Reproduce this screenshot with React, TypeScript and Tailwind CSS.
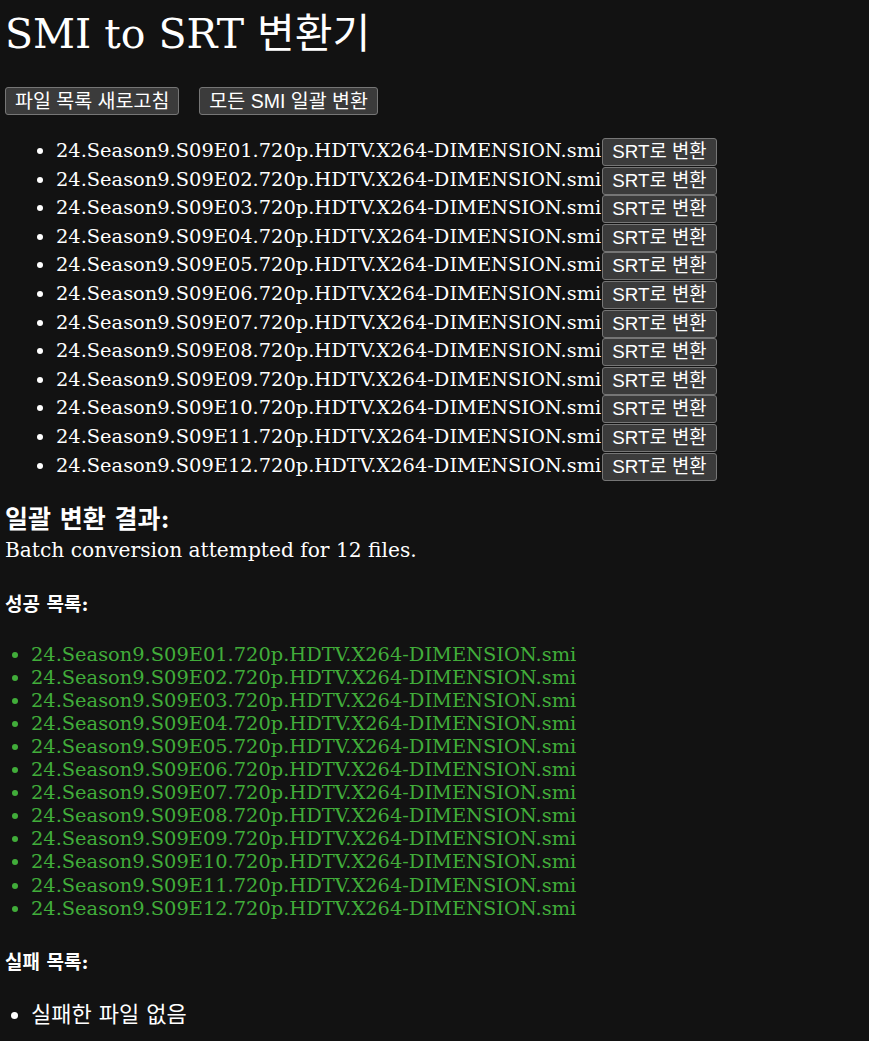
const files = Array.from({ length: 12 }, (_, i) =>
  `24.Season9.S09E${String(i + 1).padStart(2, "0")}.720p.HDTV.X264-DIMENSION.smi`
);

const serif = "font-['DejaVu_Serif','Noto_Sans_CJK_KR',serif]";
const btnFont = "font-['Liberation_Sans','Noto_Sans_CJK_KR',sans-serif]";

const Btn = ({ children, className = "" }: { children: React.ReactNode; className?: string }) => (
  <button
    type="button"
    className={`${btnFont} bg-[#3b3b3b] border border-[#767676] rounded-[3px] px-[9px] leading-[26px] text-white ${className}`}
  >
    {children}
  </button>
);

export default function App() {
  return (
    <div className={`${serif} min-h-[1041px] bg-[#121212] px-[5px] text-white text-[19.4px]`}>
      <h1 className="pt-[8px] text-[41px] leading-[52px]">SMI to SRT 변환기</h1>

      <div className="mt-[27px] flex gap-[20px]">
        <Btn className="text-[19.5px]">파일 목록 새로고침</Btn>
        <Btn className="text-[19.5px]">모든 SMI 일괄 변환</Btn>
      </div>

      <ul className="mt-[22px] list-disc pl-[51px]">
        {files.map((f) => (
          <li key={f} className="h-[28.6px] leading-[28px] whitespace-nowrap">
            <span>{f}</span>
            <Btn className="ml-[1px] text-[18.8px] align-middle">SRT로 변환</Btn>
          </li>
        ))}
      </ul>

      <h3 className="mt-[25px] text-[25px] font-bold leading-[30px]">일괄 변환 결과:</h3>
      <p className="text-[20.2px] leading-[30px]">Batch conversion attempted for 12 files.</p>

      <h4 className="mt-[26px] text-[19px] font-bold leading-[26px]">성공 목록:</h4>
      <ul className="mt-[25.5px] list-disc pl-[26px] text-[#41ad3a]">
        {files.map((f) => (
          <li key={f} className="leading-[23.1px]">
            {f}
          </li>
        ))}
      </ul>

      <h4 className="mt-[29.5px] text-[19px] font-bold leading-[26px]">실패 목록:</h4>
      <ul className="mt-[28px] list-disc pl-[26px]">
        <li className="text-[22px] leading-[24px]">실패한 파일 없음</li>
      </ul>
    </div>
  );
}
